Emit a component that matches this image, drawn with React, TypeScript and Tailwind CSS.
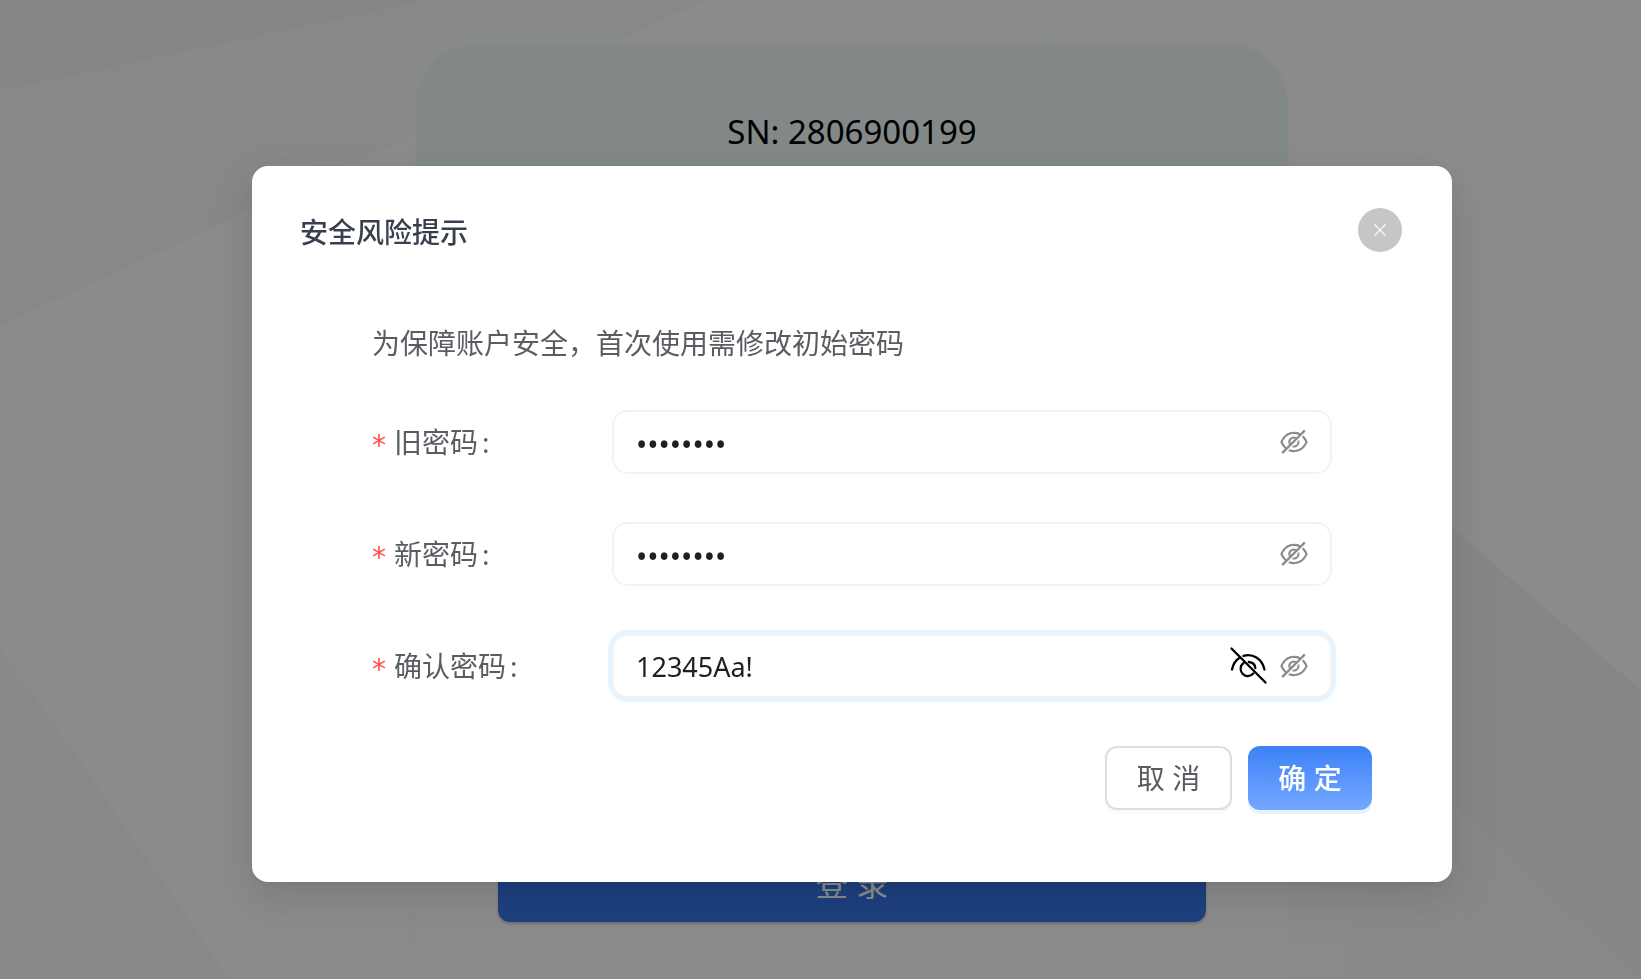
import { useState } from "react";
import { AiOutlineEyeInvisible } from "react-icons/ai";

function Backdrop() {
  return (
    <svg
      className="absolute inset-0 h-full w-full"
      viewBox="0 0 1641 979"
      preserveAspectRatio="none"
      aria-hidden="true"
    >
      <defs>
        <linearGradient id="band" gradientUnits="userSpaceOnUse" x1="0" y1="160" x2="240" y2="200">
          <stop offset="0" stopColor="#f6faf7" />
          <stop offset="0.4" stopColor="#f6f9f9" />
          <stop offset="1" stopColor="#f6f8fc" />
        </linearGradient>
        <linearGradient id="corner" x1="0" y1="0" x2="0" y2="1">
          <stop offset="0" stopColor="#f8fcf8" />
          <stop offset="0.35" stopColor="#f5f8fc" />
          <stop offset="1" stopColor="#f5f8fc" />
        </linearGradient>
        <linearGradient id="mist" x1="0" y1="0" x2="1" y2="0">
          <stop offset="0" stopColor="#f8fdf9" stopOpacity="0" />
          <stop offset="1" stopColor="#f8fdf9" />
        </linearGradient>
        <linearGradient id="slope" x1="0" y1="0" x2="1" y2="0">
          <stop offset="0" stopColor="#fafdfb" />
          <stop offset="0.55" stopColor="#f5f8fb" />
        </linearGradient>
      </defs>
      <rect width="1641" height="979" fill="#fefefe" />
      <polygon points="0,0 706,0 0,326" fill="url(#band)" />
      <polygon points="0,0 429,0 0,91" fill="#f2f4f7" />
      <polygon points="0,645 230,979 0,979" fill="url(#corner)" />
      <polygon points="930,0 1102,0 1050,44 930,44" fill="url(#mist)" />
      <polygon points="1400,60 1425,60 1350,170 1310,170" fill="#fbfdfc" />
      <polygon points="1291,390 1641,690 1641,979 1291,979" fill="url(#slope)" />
      <polygon points="1291,390 1641,690 1641,977 1291,660" fill="#f2f5f8" />
    </svg>
  );
}

function RevealOffIcon() {
  return (
    <svg
      className="h-10 w-10"
      viewBox="0 0 40 40"
      fill="none"
      stroke="black"
      strokeWidth="2.3"
      strokeLinecap="round"
      aria-hidden="true"
    >
      <path d="M3.5 2.5 37.5 36.5" />
      <path d="M4 23.5C5.2 18 8 14 12 11.6" />
      <path d="M15.5 9.8C24.5 7 34 12.5 36.5 23.5" />
      <path d="M15.6 17A7.2 7.2 0 1 0 25.3 27.5" />
      <path d="M20.8 16C24.6 16.3 27 18.6 27.3 22" />
    </svg>
  );
}

type FieldProps = {
  id: string;
  label: string;
  initial: string;
  visible?: boolean;
};

function PasswordField({ id, label, initial, visible = false }: FieldProps) {
  const [value, setValue] = useState(initial);
  return (
    <div className="grid grid-cols-[240px_1fr] items-center">
      <label htmlFor={id} className="flex items-center text-[28px] leading-[44px] text-[#595c61]">
        <span className="w-[22px] pt-2 font-['DejaVu_Sans',sans-serif] text-[#ff4d4f]">*</span>
        <span>{label}</span>
        <span className="ml-1">:</span>
      </label>
      <div
        className={
          visible
            ? "flex h-16 items-center rounded-2xl border-2 border-[#f3f3f4] bg-white pr-5 pl-[22px] ring-4 ring-[#e6f4ff]"
            : "flex h-16 items-center rounded-2xl border-2 border-[#f3f3f4] bg-white pr-5 pl-[22px]"
        }
      >
        <input
          id={id}
          type={visible ? "text" : "password"}
          value={value}
          onChange={(event) => setValue(event.target.value)}
          className={
            visible
              ? "h-11 min-w-0 flex-1 bg-transparent text-[27px] text-[#1f1f1f] outline-none"
              : "h-11 min-w-0 flex-1 bg-transparent pt-1 text-[30px] text-[#1f1f1f] outline-none"
          }
        />
        {visible && (
          <button type="button" aria-label="隐藏密码" className="mr-2.5">
            <RevealOffIcon />
          </button>
        )}
        <button type="button" aria-label="切换密码显示" className="text-[#8c8c8c]">
          <AiOutlineEyeInvisible className="h-8 w-8" />
        </button>
      </div>
    </div>
  );
}

export default function App() {
  return (
    <div className="relative h-screen overflow-hidden font-['Noto_Sans','Noto_Sans_CJK_SC',sans-serif]">
      <Backdrop />

      <main className="relative flex h-full justify-center pt-10 pl-[63px]">
        <section className="flex w-[880px] flex-col justify-between rounded-t-[64px] border-x-4 border-t-4 border-[#fefbfb]/60 bg-linear-to-b from-[#ecf8f6] to-[#fefefe] to-80% bg-clip-padding px-[82px] pt-[62px] pb-[57px]">
          <p className="text-center text-[33px] leading-[52px] text-black">SN: 2806900199</p>
          <button
            type="button"
            className="h-20 rounded-xl bg-[#3574e7] pt-1 text-[32px] text-white shadow-[0_2px_3px_rgba(0,0,0,0.2)]"
          >
            登 录
          </button>
        </section>
      </main>

      <div className="fixed inset-0 flex items-start justify-center bg-black/45 pt-[166px] pl-[63px]">
        <div
          role="dialog"
          aria-modal="true"
          aria-labelledby="dialog-title"
          className="w-[1200px] rounded-2xl bg-white px-12 pt-[42px] pb-[72px] shadow-[0_12px_32px_rgba(0,0,0,0.08),0_6px_12px_-8px_rgba(0,0,0,0.12),0_18px_56px_16px_rgba(0,0,0,0.05)]"
        >
          <header className="flex items-start justify-between pr-0.5">
            <h1 id="dialog-title" className="text-[28px] leading-[48px] font-medium text-[#3a3f4d]">
              安全风险提示
            </h1>
            <button
              type="button"
              aria-label="关闭"
              className="flex h-11 w-11 items-center justify-center rounded-full bg-[#c6c6c6]"
            >
              <svg className="h-3 w-3" viewBox="0 0 12 12" stroke="white" strokeWidth="1.2" aria-hidden="true">
                <path d="M0 0 12 12M12 0 0 12" />
              </svg>
            </button>
          </header>

          <form onSubmit={(event) => event.preventDefault()}>
            <div className="px-[72px] pt-[65px]">
              <p className="text-[28px] leading-[44px] text-[#595c61]">
                为保障账户安全，首次使用需修改初始密码
              </p>
              <div className="mt-[45px] flex flex-col gap-12">
                <PasswordField id="old-password" label="旧密码" initial="12345678" />
                <PasswordField id="new-password" label="新密码" initial="12345Aa!" />
                <PasswordField id="confirm-password" label="确认密码" initial="12345Aa!" visible />
              </div>
            </div>
            <div className="mt-12 flex justify-end gap-4 pr-8">
              <button
                type="button"
                className="h-16 w-[127px] rounded-xl border-2 border-[#dedede] bg-white text-[28px] text-[#595c61] shadow-[0_4px_0_#fafafa]"
              >
                取 消
              </button>
              <button
                type="submit"
                className="h-16 w-[124px] rounded-xl bg-linear-to-b from-[#3b82f7] to-[#74a7ff] text-[28px] font-medium text-white shadow-[0_4px_0_#e6f4ff]"
              >
                确 定
              </button>
            </div>
          </form>
        </div>
      </div>
    </div>
  );
}
